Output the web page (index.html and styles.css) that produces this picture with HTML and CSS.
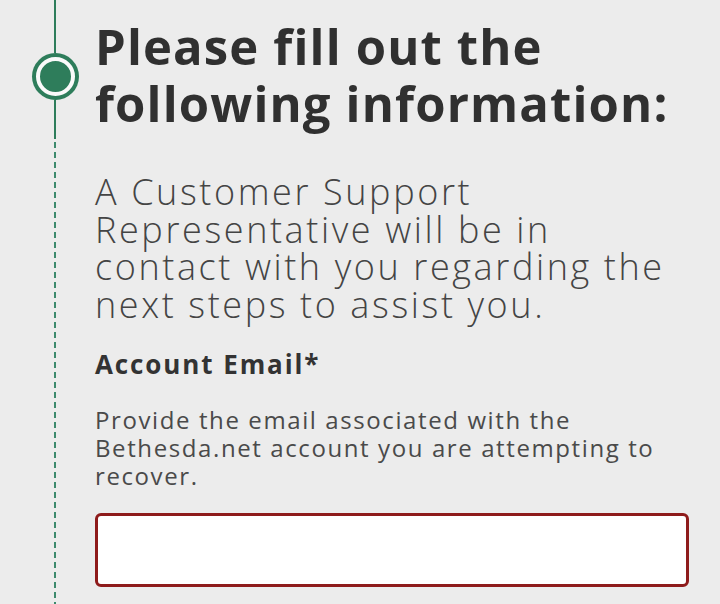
FILE: index.html
```html
<!DOCTYPE html>
<html lang="en">
<head>
    <meta charset="UTF-8">
    <meta name="viewport" content="width=device-width, initial-scale=1.0">
    <title>Account Recovery</title>
    <link rel="stylesheet" href="styles.css">
</head>
<body>

    <!-- Step with timeline rail -->
    <div class="step">
        <div class="rail">
            <div class="rail-solid rail-top"></div>
            <div class="dot"></div>
            <div class="rail-solid rail-mid"></div>
            <div class="rail-dashed"></div>
        </div>

        <div class="step-content">
            <h1>Please fill out the following information:</h1>

            <p class="intro">A Customer Support Representative will be in contact with you regarding the next steps to assist you.</p>

            <!-- Email field -->
            <label class="field-label" for="email">Account Email*</label>
            <p class="field-help">Provide the email associated with the Bethesda.net account you are attempting to recover.</p>
            <input type="email" id="email" class="field-input">
        </div>
    </div>

</body>
</html>
```

FILE: styles.css
```css
/* General Body Styling */
body {
    margin: 0;
    background-color: #ececec;
    font-family: 'Open Sans', sans-serif;
    color: #333;
    height: 604px;
    overflow: hidden;
}

/* Step Layout */
.step {
    display: flex;
    gap: 16px;
    height: 100%;
}

/* Timeline Rail */
.rail {
    display: flex;
    flex-direction: column;
    align-items: center;
    width: 48px;
    margin-left: 31px;
    flex-shrink: 0;
}

.rail-solid {
    width: 2px;
    background-color: #2e7d5b;
}

.rail-top {
    height: 53px;
}

.rail-mid {
    height: 39px;
}

.rail-dashed {
    flex: 1;
    width: 2px;
    margin-top: 3px;
    background: repeating-linear-gradient(to bottom, #3d8a6d 0 6px, transparent 6px 10px);
}

.dot {
    width: 31px;
    height: 31px;
    margin: 4px 0;
    border-radius: 50%;
    background-color: #2e7d5b;
    border: 4px solid #fafafa;
    box-shadow: 0 0 0 4px #2e7d5b;
}

/* Content */
.step-content {
    width: 594px;
    padding-top: 18px;
}

h1 {
    margin: 0;
    font-size: 49px;
    line-height: 57px;
    font-weight: 700;
    letter-spacing: 1.15px;
    color: #303030;
}

.intro {
    margin: 41px 0 0;
    font-size: 36px;
    line-height: 37.5px;
    font-weight: 300;
    letter-spacing: 2.6px;
    color: #444;
}

.field-label {
    display: block;
    margin-top: 26px;
    font-size: 26px;
    line-height: 30px;
    font-weight: 700;
    letter-spacing: 1.9px;
    color: #333;
}

.field-help {
    margin: 27px 0 0;
    font-size: 24px;
    line-height: 28px;
    letter-spacing: 1.6px;
    color: #4a4a4a;
}

.field-input {
    display: block;
    box-sizing: border-box;
    width: 594px;
    height: 74px;
    margin-top: 23px;
    border: 3px solid #8e1b1b;
    border-radius: 6px;
    background-color: #fff;
}
```
